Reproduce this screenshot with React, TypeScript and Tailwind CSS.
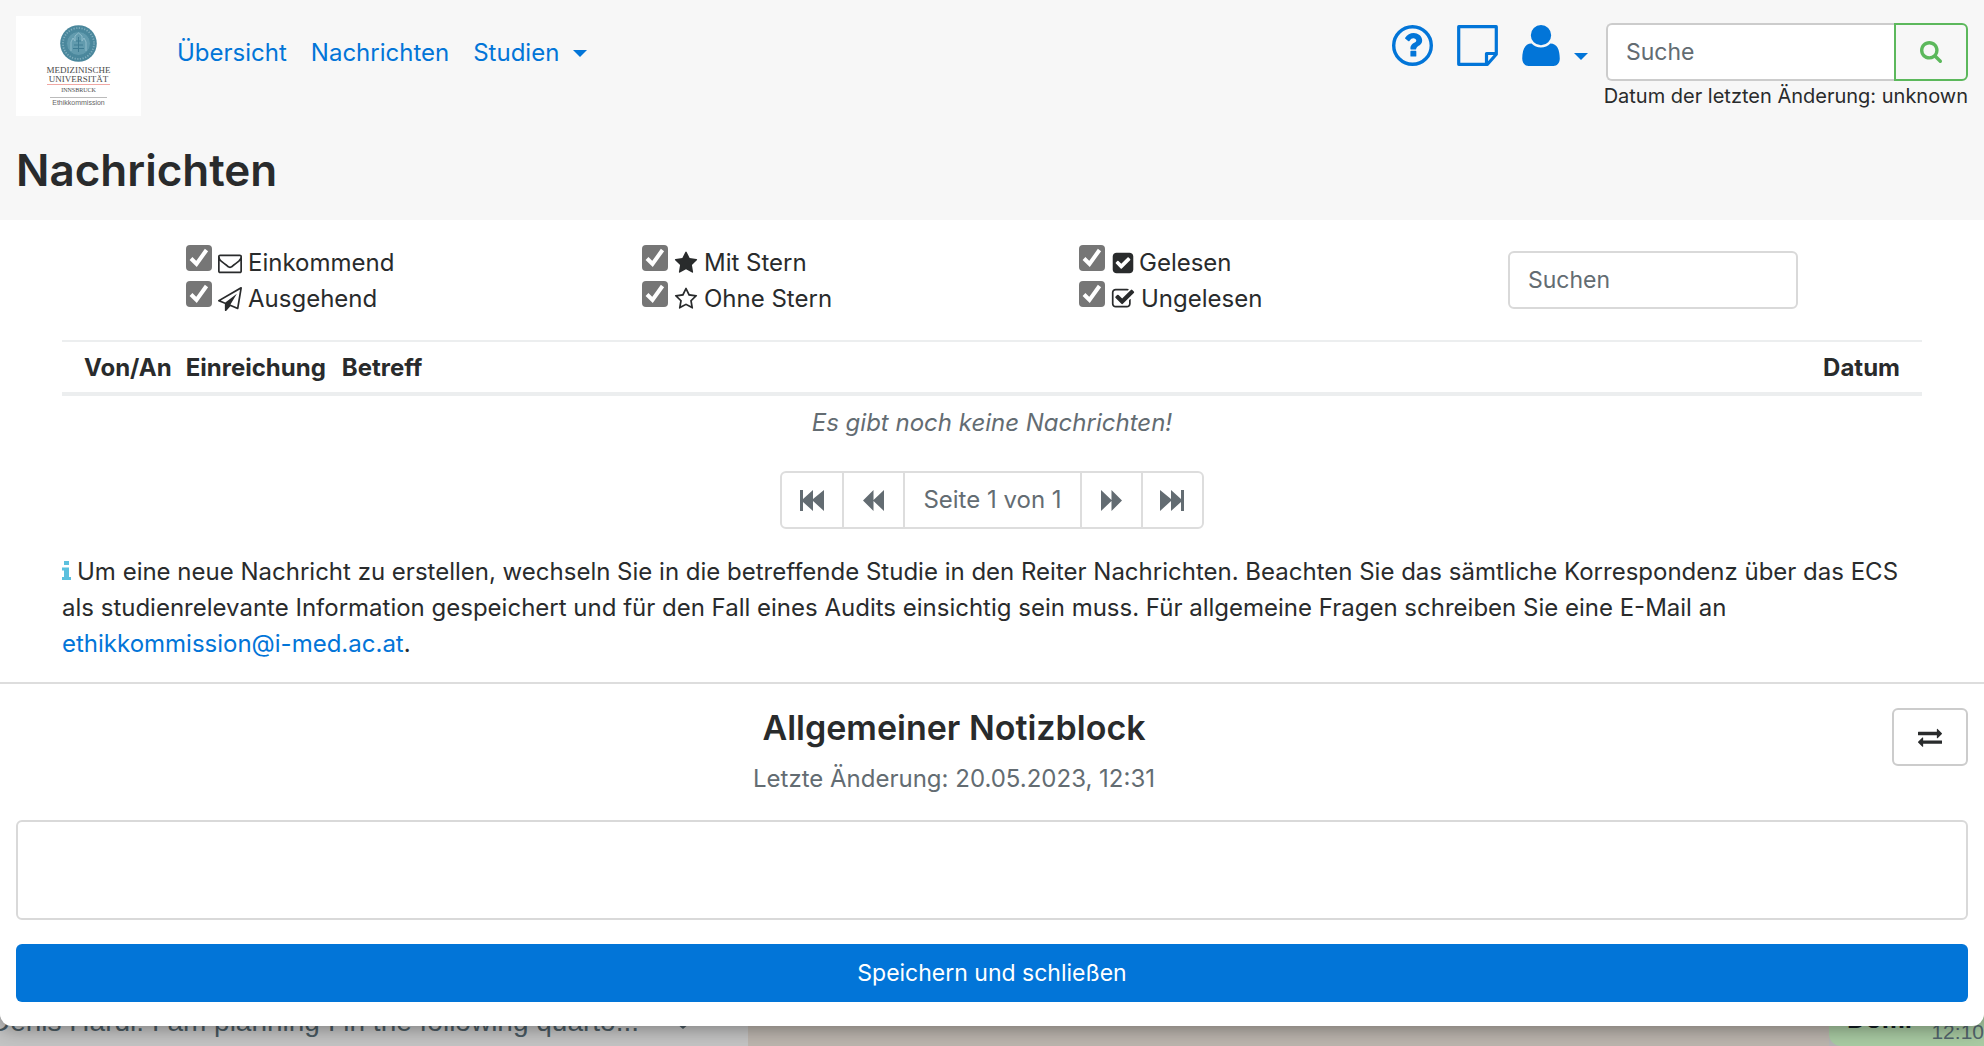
import React from "react";

const P = {
  question:
    "M1088 1256v240q0 16-12 28t-28 12h-240q-16 0-28-12t-12-28v-240q0-16 12-28t28-12h240q16 0 28 12t12 28zm316-600q0 54-15.5 101t-35 76.5-55 59.5-57.5 43.5-61 35.5q-41 23-68.5 65t-27.5 67q0 17-12 32.5t-28 15.5h-240q-15 0-25.5-18.5t-10.5-37.5v-45q0-83 65-156.5t143-108.5q59-27 84-56t25-76q0-42-46.5-74t-107.5-32q-65 0-108 29-35 25-107 115-13 16-31 16-12 0-25-8l-164-125q-13-10-15.5-25t5.5-28q160-266 464-266 80 0 161 31t146 83 106 127.5 41 158.5z",
  user: "M19 0a10.300 10.300 0 1 1 0 20.600a10.300 10.300 0 1 1 0-20.600zM9.500 18.800C12 21.500 15.300 22.800 19 22.800S26 21.500 28.500 18.800C35.500 18.800 38 25.500 38 34C38 38.500 35.500 41.500 31.500 41.500H6.500C2.500 41.500 0 38.500 0 34C0 25.500 2.500 18.800 9.500 18.800z",
  search:
    "M1216 832q0-185-131.5-316.5t-316.5-131.5-316.5 131.5-131.5 316.5 131.5 316.5 316.5 131.5 316.5-131.5 131.5-316.5zm512 832q0 52-38 90t-90 38q-54 0-90-38l-343-342q-179 124-399 124-143 0-273.5-55.5t-225-150-150-225-55.5-273.5 55.5-273.5 150-225 225-150 273.5-55.5 273.5 55.5 225 150 150 225 55.5 273.5q0 220-124 399l343 343q37 37 37 90z",
  star: "M1728 647q0 22-26 48l-363 354 86 500q1 7 1 20 0 21-10.5 35.5t-30.5 14.5q-19 0-40-12l-449-236-449 236q-22 12-40 12-21 0-31.5-14.5t-10.5-35.5q0-6 2-20l86-500-364-354q-25-27-25-48 0-37 56-46l502-73 225-455q19-41 49-41t49 41l225 455 502 73q56 9 56 46z",
  starO:
    "M1201 1004l306-297-422-62-189-382-189 382-422 62 306 297-73 421 378-199 377 199zm527-357q0 22-26 48l-363 354 86 500q1 7 1 20 0 50-41 50-19 0-40-12l-449-236-449 236q-22 12-40 12-21 0-31.5-14.5t-10.5-35.5q0-6 2-20l86-500-364-354q-25-27-25-48 0-37 56-46l502-73 225-455q19-41 49-41t49 41l225 455 502 73q56 9 56 46z",
  check:
    "M813 1299l614-614q19-19 19-45t-19-45l-102-102q-19-19-45-19t-45 19l-467 467-211-211q-19-19-45-19t-45 19l-102 102q-19 19-19 45t19 45l358 358q19 19 45 19t45-19zm851-883v960q0 119-84.5 203.5t-203.5 84.5h-960q-119 0-203.5-84.5t-84.5-203.5v-960q0-119 84.5-203.5t203.5-84.5h960q119 0 203.5 84.5t84.5 203.5z",
  checkO:
    "M1472 930v318q0 119-84.5 203.5t-203.5 84.5h-832q-119 0-203.5-84.5t-84.5-203.5v-832q0-119 84.5-203.5t203.5-84.5h832q63 0 117 25 15 7 18 23 3 17-9 29l-49 49q-10 10-23 10-3 0-9-2-23-6-45-6h-832q-66 0-113 47t-47 113v832q0 66 47 113t113 47h832q66 0 113-47t47-113v-254q0-13 9-22l64-64q10-10 23-10 6 0 12 3 20 8 20 29zm231-489l-814 814q-24 24-57 24t-57-24l-430-430q-24-24-24-57t24-57l110-110q24-24 57-24t57 24l263 263 647-647q24-24 57-24t57 24l110 110q24 24 24 57t-24 57z",
  envelope:
    "M1664 1504v-768q-32 36-69 66-268 206-426 338-51 43-83 67t-86.5 48.5-102.5 24.5h-2q-48 0-102.5-24.5t-86.5-48.5-83-67q-158-132-426-338-37-30-69-66v768q0 13 9.5 22.5t22.5 9.5h1472q13 0 22.5-9.5t9.5-22.5zm0-1051v-24.5l-.5-13-3-12.5-5.5-9-9-7.5-14-2.5h-1472q-13 0-22.5 9.5t-9.5 22.5q0 168 147 284 193 152 401 317 6 5 35 29.5t46 37.5 44.5 31.5 50.5 27.5 43 9h2q20 0 43-9t50.5-27.5 44.5-31.5 46-37.5 35-29.5q208-165 401-317 54-43 100.5-115.5t46.5-131.5zm128-37v1088q0 66-47 113t-113 47h-1472q-66 0-113-47t-47-113v-1088q0-66 47-113t113-47h1472q66 0 113 47t47 113z",
  plane:
    "M1764 11q33 24 27 64l-256 1536q-5 29-32 45-14 8-31 8-11 0-24-5l-527-215-298 327q-18 21-47 21-14 0-23-4-19-7-30-23.5t-11-36.5v-452l-472-193q-37-14-40-55-3-39 32-59l1664-960q35-21 68 2zm-342 1499l221-1323-1434 827 336 137 863-639-478 797z",
  exchange:
    "M1792 1184v192q0 13-9.5 22.5t-22.5 9.5h-1376v192q0 13-9.5 22.5t-22.5 9.5q-12 0-24-10l-319-320q-9-9-9-22 0-14 9-23l320-320q9-9 23-9 13 0 22.5 9.5t9.5 22.5v192h1376q13 0 22.5 9.5t9.5 22.5zm0-544q0 14-9 23l-320 320q-9 9-23 9-13 0-22.5-9.5t-9.5-22.5v-192h-1376q-13 0-22.5-9.5t-9.5-22.5v-192q0-13 9.5-22.5t22.5-9.5h1376v-192q0-14 9-23t23-9q12 0 24 10l319 319q9 9 9 23z",
};

function Icon({ d, box = "0 0 1792 1792", className }: { d: string; box?: string; className: string }) {
  return (
    <svg viewBox={box} className={className} fill="currentColor" aria-hidden="true">
      <path d={d} />
    </svg>
  );
}

function Caret() {
  return <Icon d="M0 0h14l-7 7z" box="0 0 14 7" className="h-[7px] w-[14px]" />;
}

function Logo() {
  return (
    <a href="#start" aria-label="Startseite" className="flex h-[100px] w-[125px] shrink-0 bg-white">
      <svg viewBox="0 0 125 100" className="h-full w-full">
        <circle cx="62.500" cy="27.500" r="18.300" fill="#4a879c" />
        <circle cx="62.500" cy="27.500" r="15.500" fill="none" stroke="#7fadbd" strokeWidth="1.800" strokeDasharray="1.200 1.500" />
        <circle cx="62.500" cy="27.500" r="12" fill="#629bae" stroke="#4a879c" />
        <path d="M55 35v-9l2-4 2 3v-5l3.500-3 3.500 3v5l2-3 2 4v9" fill="none" stroke="#8fbccb" />
        <path d="M58 29h9M62.500 21v15M57 32.500h11M60 25h5" fill="none" stroke="#3f7c93" />
        <g textAnchor="middle" fontFamily="Liberation Serif, serif" fill="#4a4a4a">
          <text x="62.500" y="57" fontSize="9">MEDIZINISCHE</text>
          <text x="62.500" y="66" fontSize="9">UNIVERSITÄT</text>
          <text x="62.500" y="76" fontSize="6">INNSBRUCK</text>
        </g>
        <path d="M31 68.500h63" stroke="#f0a8a4" />
        <path d="M34 81.500h57" stroke="#bbb" />
        <text x="62.500" y="89" textAnchor="middle" fontSize="7" fontFamily="Liberation Sans, sans-serif" fill="#666">Ethikkommission</text>
      </svg>
    </a>
  );
}

function Filter({ d, label, icon }: { d: string; label: string; icon: string }) {
  return (
    <label className="flex h-9 items-center">
      <span className="relative mb-2.5 mr-1.5 flex h-[26px] w-[26px]">
        <input type="checkbox" defaultChecked className="peer h-full w-full appearance-none rounded-[4px] bg-[#767676]" />
        <svg viewBox="0 0 26 26" className="pointer-events-none absolute inset-0 hidden peer-checked:block" fill="none" stroke="#fff" strokeWidth="4">
          <path d="M5 13.500l5.500 5.500L20.500 5" />
        </svg>
      </span>
      <Icon d={d} className={icon} />
      {label}
    </label>
  );
}

const pageBtn = "flex w-[61px] items-center justify-center border-l-2 border-[#ddd] first:w-[60px] first:border-l-0";

export default function App() {
  return (
    <div className="relative flex h-screen flex-col overflow-hidden bg-[#b5b5b5] font-[Inter,sans-serif] text-[24px] leading-9 text-[#292b2c]">
      <div className="relative z-10 shrink-0 rounded-b-[12px] bg-white pb-6 shadow-[0_2px_20px_rgba(0,0,0,0.4)]">
        <header className="bg-[#f7f7f7] px-4 pb-5 pt-4">
          <div className="flex items-start">
            <Logo />
            <nav className="ml-9 mt-[19px] flex gap-6 text-[#0275d8]">
              <a href="#uebersicht">Übersicht</a>
              <a href="#nachrichten">Nachrichten</a>
              <a href="#studien" className="flex items-center gap-3.5">Studien <Caret /></a>
            </nav>
            <div className="ml-auto mt-[9px] flex text-[#0275d8]">
              <a href="#hilfe" aria-label="Hilfe" className="mr-6">
                <svg viewBox="0 0 41 41" className="h-[41px] w-[41px]" fill="currentColor">
                  <circle cx="20.500" cy="20.500" r="18.800" fill="none" stroke="currentColor" strokeWidth="3.400" />
                  <path transform="translate(4.200 3.200) scale(.0185)" d={P.question} />
                </svg>
              </a>
              <a href="#notizen" aria-label="Notizen" className="mr-6">
                <svg viewBox="0 0 41 41" className="h-[41px] w-[41px]" fill="none" stroke="currentColor" strokeWidth="3.200" strokeLinejoin="round">
                  <path d="M1.700 1.700h37.600v27.500L30.500 39.300H1.700zM29.500 39v-10.500H39" />
                </svg>
              </a>
              <a href="#profil" aria-label="Profil" className="flex items-end gap-3.5">
                <Icon d={P.user} box="0 0 38 41.5" className="h-[41px] w-[38px]" />
                <span className="mb-1.5"><Caret /></span>
              </a>
            </div>
            <div className="ml-4 mt-[7px] flex flex-col items-end">
              <form className="flex h-[58px] w-[362px]">
                <input aria-label="Suche" placeholder="Suche" className="min-w-0 flex-1 rounded-l-md border-2 border-r-0 border-[#ccc] bg-white px-[18px] text-[23px] placeholder-[#636c72]" />
                <button type="button" aria-label="Suchen" className="flex w-[74px] items-center justify-center rounded-r-md border-2 border-[#5cb85c] text-[#5cb85c]">
                  <Icon d={P.search} box="64 128 1664 1664" className="h-[22px] w-[22px]" />
                </button>
              </form>
              <p className="whitespace-nowrap text-[20px] leading-[30px]">Datum der letzten Änderung: unknown</p>
            </div>
          </div>
          <h1 className="mt-6 text-[44px] font-semibold leading-[60px]">Nachrichten</h1>
        </header>

        <main className="px-[62px] pt-[25px]">
          <div className="flex items-start px-[124px]">
            <div className="w-[456px]">
              <Filter d={P.envelope} label="Einkommend" icon="mr-1.5 h-6 w-6" />
              <Filter d={P.plane} label="Ausgehend" icon="mr-1.5 h-6 w-6" />
            </div>
            <div className="w-[437px]">
              <Filter d={P.star} label="Mit Stern" icon="mr-1.5 h-6 w-6" />
              <Filter d={P.starO} label="Ohne Stern" icon="mr-1.5 h-6 w-6" />
            </div>
            <div>
              <Filter d={P.check} label="Gelesen" icon="mr-1 h-6 w-6" />
              <Filter d={P.checkO} label="Ungelesen" icon="mr-1.5 h-6 w-6" />
            </div>
            <input aria-label="Suchen" placeholder="Suchen" className="ml-auto mt-[6px] h-[58px] w-[290px] rounded-md border-2 border-[#d9d9d9] px-[18px] text-[23px] placeholder-[#636c72]" />
          </div>

          <table className="mt-[23px] w-full border-t-2 border-[#eceeef]">
            <thead>
              <tr className="border-b-4 border-[#eceeef] text-left">
                <th className="w-px whitespace-nowrap pb-1.5 pl-[22px] pt-2 font-bold">Von/An</th>
                <th className="w-px whitespace-nowrap pb-1.5 pl-[14px] pt-2 font-bold">Einreichung</th>
                <th className="pb-1.5 pl-4 pt-2 font-bold">Betreff</th>
                <th className="pb-1.5 pr-[22px] pt-2 text-right font-bold">Datum</th>
              </tr>
            </thead>
            <tbody>
              <tr>
                <td colSpan={4} className="pt-[9px] text-center italic text-[#636c72]">Es gibt noch keine Nachrichten!</td>
              </tr>
            </tbody>
          </table>

          <div className="mx-auto mt-[30px] flex h-[58px] w-fit rounded-md border-2 border-[#ddd] text-[#636c72]">
            <button aria-label="Erste Seite" className={pageBtn}>
              <Icon d="M0 0h3v9L13 0v9L24 0v21L13 11v10L3 12v9H0z" box="0 0 24 21" className="h-[21px] w-6" />
            </button>
            <button aria-label="Vorherige Seite" className={pageBtn}>
              <Icon d="M0 10.500L10.500 0v10L21 0v21L10.500 11v10z" box="0 0 21 21" className="h-[21px] w-[21px]" />
            </button>
            <span className="flex items-center border-l-2 border-[#ddd] px-[18px]">Seite 1 von 1</span>
            <button aria-label="Nächste Seite" className={pageBtn}>
              <Icon d="M21 10.500L10.500 0v10L0 0v21L10.500 11v10z" box="0 0 21 21" className="h-[21px] w-[21px]" />
            </button>
            <button aria-label="Letzte Seite" className={pageBtn}>
              <Icon d="M24 0h-3v9L11 0v9L0 0v21L11 11v10l10-9v9h3z" box="0 0 24 21" className="h-[21px] w-6" />
            </button>
          </div>

          <p className="mt-[25px]">
            <Icon d="M2 0h5v4H2zM0 6.500h7V16h2v3H0v-3h2V9.500H0z" box="0 0 9 19" className="mr-1.5 inline h-[19px] w-[9px] align-baseline text-[#5bc0de]" />
            Um eine neue Nachricht zu erstellen, wechseln Sie in die betreffende Studie in den Reiter Nachrichten. Beachten Sie das sämtliche Korrespondenz über das ECS als studienrelevante Information gespeichert und für den Fall eines Audits einsichtig sein muss. Für allgemeine Fragen schreiben Sie eine E-Mail an{" "}
            <a href="mailto:ethikkommission@i-med.ac.at" className="text-[#0275d8]">ethikkommission@i-med.ac.at</a>.
          </p>
        </main>

        <section className="mt-5 border-t-2 border-[#ddd] px-4 pt-6">
          <div className="flex items-start">
            <div className="flex-1 text-center">
              <h2 className="text-[34px] font-semibold leading-10">Allgemeiner Notizblock</h2>
              <p className="mt-[13px] text-[#636c72]">Letzte Änderung: 20.05.2023, 12:31</p>
            </div>
            <button aria-label="Notizblock wechseln" className="flex h-[58px] w-[76px] items-center justify-center rounded-md border-2 border-[#ccc]">
              <Icon d={P.exchange} className="h-6 w-6" />
            </button>
          </div>
          <textarea aria-label="Notiz" className="mt-[23px] block h-[100px] w-full resize-none rounded-md border-2 border-[#d9d9d9] px-4 py-2" />
          <button className="mt-6 h-[58px] w-full rounded-md bg-[#0275d8] text-[23px] text-white">Speichern und schließen</button>
        </section>
      </div>

      <div className="-mt-4 flex h-9 shrink-0 font-['Liberation_Sans',sans-serif]">
        <div className="flex w-[748px] bg-[#c4c4c4] text-[28px] leading-6 text-[#4a5a62]">
          <span className="-ml-2.5 whitespace-nowrap">Denis Hardi: I am planning I in the following quarto...</span>
          <svg viewBox="0 0 16 9" className="ml-9 mt-2.5 h-[9px] w-4" fill="none" stroke="currentColor" strokeWidth="3" aria-hidden="true">
            <path d="M1 1l7 6 7-6" />
          </svg>
        </div>
        <div className="flex-1 bg-[#bcb5ae]" />
        <div className="flex w-[155px] justify-between overflow-hidden rounded-bl-xl bg-[#a9cba3] pl-[18px]">
          <span className="text-[26px] font-bold leading-[18px] text-[#111b21]">Domi</span>
          <span className="pt-2.5 text-[21px] leading-6 text-[#53656d]">12:10</span>
        </div>
      </div>
    </div>
  );
}
